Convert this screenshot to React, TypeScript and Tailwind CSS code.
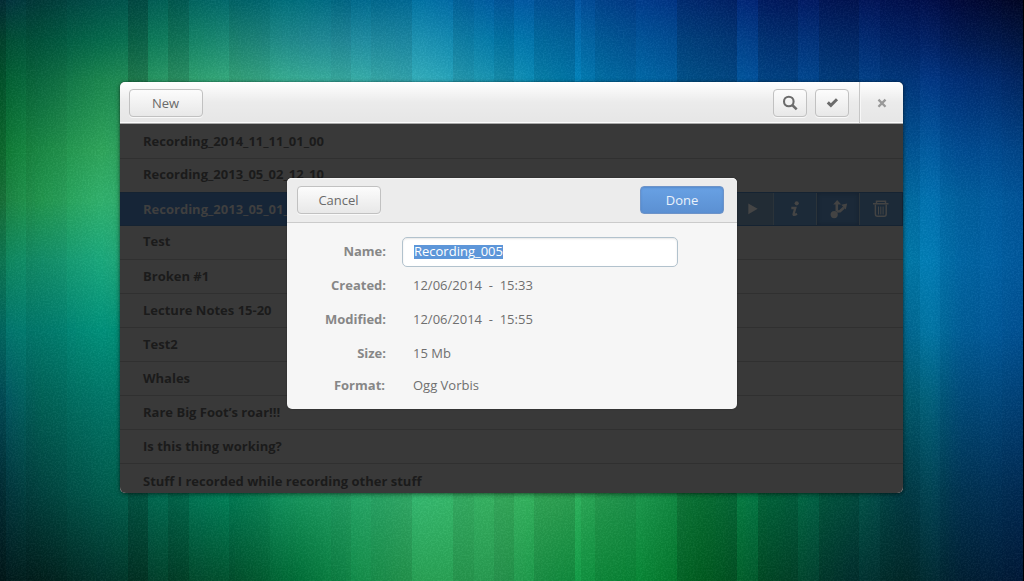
import React from "react";

type RGB = [number, number, number];

const STOPS = [0, 40, 80, 150, 200, 260, 330, 400, 490, 581];

// Wallpaper colours on a coarse grid: [x, colour at each stop].
const COLUMNS: [number, string][] = [
  [0, "01303a 004830 005a2e 0c7230 187a3c 0c8058 007068 00505c 003038 00181a"],
  [40, "003c3a 00543c 0a6a40 1a8c46 229a50 12906a 007c6e 006458 004440 001f1c"],
  [100, "004e48 04684a 1a864e 2ea45a 30b06c 1aa87c 00907a 007466 005a4c 003028"],
  [170, "005e54 0f7a5a 2a9664 2aa068 2aa068 2aa068 00886c 007c68 006c50 004028"],
  [230, "00666a 1a8672 34a67a 2aa068 2aa068 2aa068 00886c 007c68 008058 00502c"],
  [300, "007080 208a90 38ae98 2aa068 2aa068 2aa068 00886c 007c68 189a60 007038"],
  [350, "006a8c 208c9e 38aea6 2aa068 2aa068 2aa068 00886c 007c68 24a466 108a48"],
  [420, "006c9c 1a8aa8 30a4b2 2aa068 2aa068 2aa068 00886c 007c68 34b06a 26984e"],
  [500, "0058a0 0076a8 1490b0 2aa068 2aa068 2aa068 00886c 007c68 36b05e 26984e"],
  [560, "005098 0068a2 007cae 2aa068 2aa068 2aa068 00886c 007c68 30a856 129040"],
  [630, "003c8c 005498 0068a6 2aa068 2aa068 2aa068 00886c 007c68 1e984e 088836"],
  [700, "002c7c 00448a 005698 2aa068 2aa068 2aa068 00886c 007c68 087e3a 006824"],
  [770, "001c68 00347c 004890 2aa068 2aa068 2aa068 00886c 007c68 006c40 004c28"],
  [850, "001458 002a70 003e84 2aa068 2aa068 2aa068 00886c 007c68 005444 003230"],
  [905, "001050 002268 003880 00589a 0070a8 007eb0 006c98 005c70 003c48 002828"],
  [930, "000c46 001e60 003480 00589c 006eac 0078b0 0072a0 005c78 004050 002830"],
  [960, "00083a 001a54 002e78 004e96 0062a2 0068a8 00609c 004c7c 003454 002034"],
  [1023, "000624 001440 002460 004488 00549a 00589e 005094 004078 002a54 001838"],
];

const hex = (s: string): RGB => [
  parseInt(s.slice(0, 2), 16),
  parseInt(s.slice(2, 4), 16),
  parseInt(s.slice(4, 6), 16),
];

const GRID = COLUMNS.map(([x, s]) => ({ x, colors: s.split(" ").map(hex) }));

// Pleats of the wallpaper: [start x, shade], negative is darker.
const PLEATS: [number, number][] = [
  [0, -0.05], [6, 0.05], [26, -0.01], [67, 0.02], [128, -0.09], [148, 0.05],
  [168, -0.04], [189, 0.05], [229, -0.02], [270, 0.02], [290, 0], [331, -0.02],
  [351, 0.02], [371, -0.01], [412, 0.08], [453, -0.01], [474, 0.03],
  [494, -0.02], [514, 0.06], [534, -0.02], [575, 0.12], [581, 0.04],
  [595, -0.02], [636, 0.03], [656, 0.03], [677, -0.07], [737, 0.09],
  [758, -0.05], [798, 0.05], [819, -0.05], [859, 0.05], [880, -0.02],
  [900, -0.02], [920, 0.05], [940, -0.01], [980, 0.02], [1002, 0],
];

function columnGradient(x: number): string {
  let i = 0;
  while (i < GRID.length - 2 && GRID[i + 1].x <= x) i++;
  const a = GRID[i];
  const b = GRID[i + 1];
  const t = Math.min(1, (x - a.x) / (b.x - a.x));
  let shade = 0;
  for (const [start, value] of PLEATS) if (start <= x) shade = value;
  const stops = STOPS.map((y, k) => {
    const c = a.colors[k].map((v, n) => {
      const base = v + (b.colors[k][n] - v) * t;
      const lift = (base * 0.7 + 30) * shade * (n === 0 ? 0.5 : 1);
      return Math.round(shade < 0 ? base * (1 + shade * 1.6) : base + lift);
    });
    return `rgb(${c.join(",")}) ${y}px`;
  });
  return `linear-gradient(${stops.join(",")})`;
}

function Wallpaper() {
  const edges: number[] = [];
  PLEATS.forEach(([start], i) => {
    const end = i + 1 < PLEATS.length ? PLEATS[i + 1][0] : 1023;
    for (let x = start; x < end; x += 3) edges.push(x);
  });
  edges.push(1023);
  return (
    <div className="absolute inset-0 flex bg-black">
      {edges.slice(0, -1).map((x, i) => (
        <div key={x} className="h-full shrink-0" style={{ width: edges[i + 1] - x, backgroundImage: columnGradient(x) }} />
      ))}
      <svg className="absolute inset-0 opacity-[0.035]" width="1024" height="581" aria-hidden="true">
        <filter id="grain" x="0" y="0" width="100%" height="100%" colorInterpolationFilters="sRGB">
          <feTurbulence type="fractalNoise" baseFrequency="0.6" numOctaves="2" />
          <feColorMatrix values="3 0 0 0 -1.2  3 0 0 0 -1.2  3 0 0 0 -1.2  0 0 0 0 1" />
        </filter>
        <rect width="1023" height="581" filter="url(#grain)" />
      </svg>
    </div>
  );
}

const ROWS: { name: string; box: string }[] = [
  { name: "Recording_2014_11_11_01_00", box: "h-[35px] border-b pt-[7px]" },
  { name: "Recording_2013_05_02_12_10", box: "h-[33px] pt-[5px]" },
  { name: "Recording_2013_05_01_12_10", box: "" },
  { name: "Test", box: "h-[34px] border-b pt-[5px]" },
  { name: "Broken #1", box: "h-[34px] border-b pt-[6px]" },
  { name: "Lecture Notes 15-20", box: "h-[34px] border-b pt-[6px]" },
  { name: "Test2", box: "h-[34px] border-b pt-[6px]" },
  { name: "Whales", box: "h-[34px] border-b pt-[6px]" },
  { name: "Rare Big Foot’s roar!!!", box: "h-[34px] border-b pt-[6px]" },
  { name: "Is this thing working?", box: "h-[34px] border-b pt-[6px]" },
  { name: "Stuff I recorded while recording other stuff", box: "h-[29px] pt-[7px]" },
];

const DETAILS: { label: string; value: string; box: string; gap: string }[] = [
  { label: "Created:", value: "12/06/2014\u00a0 -\u00a0 15:33", box: "mt-[8px]", gap: "w-[99px] mr-[27px]" },
  { label: "Modified:", value: "12/06/2014\u00a0 -\u00a0 15:55", box: "mt-[14px]", gap: "w-[99px] mr-[27px]" },
  { label: "Size:", value: "15 Mb", box: "mt-[14px]", gap: "w-[99px] mr-[27px]" },
  { label: "Format:", value: "Ogg Vorbis", box: "mt-[12px]", gap: "w-[98px] mr-[28px]" },
];

const BUTTON =
  "flex items-center justify-center rounded-[4px] border border-[#c1c1c1] bg-gradient-to-b from-[#fcfcfc] to-[#e8e8e8] text-[#6a6a6a] shadow-[0_1px_0_rgba(255,255,255,0.7)]";

function SelectedRow() {
  return (
    <li className="flex h-[34px] justify-between border-y border-y-[#152332] bg-[#162537] text-[#3f3f3f]">
      <span className="pl-[23px] pt-[6px] leading-5">Recording_2013_05_01_12_10</span>
      <div className="flex">
        <div className="flex w-[43px] border-r border-[#2b3339] bg-[#222c35]">
          <svg width="42" height="32" viewBox="0 0 42 32">
            <path d="M17.3 10.5L26.700 15.800L17.3 21.200Z" fill="#454545" />
          </svg>
        </div>
        <div className="flex w-[43px] border-r border-[#2b3339] bg-[#1c2a38]">
          <svg width="42" height="32" viewBox="0 0 42 32" fill="none" stroke="#454545">
            <circle cx="22.700" cy="10.300" r="2.100" fill="#454545" stroke="none" />
            <path d="M17.300 15H21.300L19.600 21Q19.200 23 23 20.800" strokeWidth="2.300" />
          </svg>
        </div>
        <div className="flex w-[43px] border-r border-[#2b3339] bg-[#1b2938] shadow-[inset_0_0_4px_rgba(18,28,40,0.7)]">
          <svg width="42" height="32" viewBox="0 0 42 32" fill="#434343" stroke="#434343">
            <circle cx="17.200" cy="21.600" r="3.600" stroke="none" />
            <path d="M19.800 18.500V10M20 18.500L23 18.300L27 14.500" strokeWidth="2.600" />
            <path d="M16.200 11.500L20.200 7L24.200 11.500ZM24.200 11.700L30.200 10.600L28.800 16.500Z" stroke="none" />
          </svg>
        </div>
        <div className="flex w-[43px] border-r border-[#152332] bg-[#1c2a38]">
          <svg width="42" height="32" viewBox="0 0 42 32" fill="none" stroke="#434343">
            <path d="M16.500 10V8.300H25.500V10M13 10.700H28.500" strokeWidth="1.500" />
            <path d="M15.400 11.500V21Q15.400 23.300 17.400 23.300H24.200Q26.200 23.300 26.200 21V11.500" strokeWidth="1.500" />
            <path d="M18.500 13.500V21.500M20.800 13.500V21.500M23.100 13.500V21.500" />
          </svg>
        </div>
      </div>
    </li>
  );
}

export default function App() {
  return (
    <div className="relative h-[581px] w-[1024px] overflow-hidden pl-[120px] pt-[82px] font-['Open_Sans','Noto_Sans',sans-serif] text-[13px]">
      <Wallpaper />
      <main className="relative flex h-[411px] w-[783px] flex-col rounded-[5px] bg-[#aaa] shadow-[0_1px_5px_rgba(0,0,0,0.55),0_0_1px_rgba(0,0,0,0.6)]">
        <header className="flex h-[42px] shrink-0 rounded-t-[5px] border-b border-[#a9a9a9] bg-gradient-to-b from-white via-[#ebebeb] to-[#e6e6e6] shadow-[inset_0_-1px_0_#fbfbfb]">
          <button className={`${BUTTON} ml-[9px] mt-[7px] h-[28px] w-[74px] pr-px pt-px`}>New</button>
          <button className={`${BUTTON} ml-auto mt-[7px] h-[28px] w-[34px]`} aria-label="Search">
            <svg width="32" height="26" viewBox="0 0 32 26" fill="none" stroke="#6b6b6b">
              <circle cx="14.800" cy="11.500" r="4.800" strokeWidth="2.100" />
              <path d="M18.200 15L22.700 19.400" strokeWidth="2.500" />
            </svg>
          </button>
          <button className={`${BUTTON} ml-[8px] mt-[7px] h-[28px] w-[34px]`} aria-label="Select">
            <svg width="32" height="26" viewBox="0 0 32 26" fill="none" stroke="#6b6b6b">
              <path d="M11.800 12.300L14.900 15.300L21 9.300" strokeWidth="3" />
            </svg>
          </button>
          <button className="ml-[10px] flex w-[44px] items-center justify-center border-l border-[#c6c6c6] shadow-[inset_1px_0_0_#f7f7f7]" aria-label="Close">
            <svg width="44" height="42" viewBox="0 0 44 42" fill="none" stroke="#999">
              <path d="M18.900 17.600L26.100 24.800M26.100 17.600L18.900 24.800" strokeWidth="2.400" />
            </svg>
          </button>
        </header>
        <ul className="h-[369px] overflow-hidden rounded-b-[6px] bg-[#393939] font-bold text-[#1b1b1b]">
          {ROWS.map((row, i) =>
            i === 2 ? (
              <SelectedRow key={row.name} />
            ) : (
              <li key={row.name} className={`border-[#303030] pl-[23px] leading-5 ${row.box}`}>
                {row.name}
              </li>
            )
          )}
        </ul>
        <section role="dialog" className="absolute left-[167px] top-[96px] h-[231px] w-[450px] rounded-[5px] bg-[#f6f6f6] text-[#6f6f6f] shadow-[0_0_2px_rgba(0,0,0,0.3)]">
          <div className="flex h-[45px] justify-between rounded-t-[5px] border-b border-[#cbcbcb] bg-[#ececec] pl-[10px] pr-[13px] pt-[8px] shadow-[inset_0_1px_0_#f6f6f6]">
            <button className={`${BUTTON} h-[28px] w-[84px] pr-px pt-px`}>Cancel</button>
            <button className="flex h-[28px] w-[84px] items-center justify-center rounded-[4px] border border-[#6d93c8] bg-gradient-to-b from-[#68a1e4] to-[#5b90d2] pt-px text-[#eaf2fb] shadow-[inset_0_1px_2px_rgba(60,110,180,0.45)]">
              Done
            </button>
          </div>
          <div className="flex pt-[14px]">
            <span className="w-[99px] pt-[4px] text-right font-bold leading-5 text-[#878787]">Name:</span>
            <div className="ml-[16px] flex h-[30px] w-[276px] items-center rounded-[5px] border border-[#b2c2cd] bg-white pl-[11px] shadow-[inset_0_1px_2px_rgba(0,0,0,0.1)]">
              <span className="h-[14px] bg-[#5d96d9] leading-[13px] text-white">Recording_005</span>
            </div>
          </div>
          {DETAILS.map((d) => (
            <div key={d.label} className={`flex h-5 leading-5 ${d.box}`}>
              <span className={`text-right font-bold text-[#878787] ${d.gap}`}>{d.label}</span>
              <span>{d.value}</span>
            </div>
          ))}
        </section>
      </main>
    </div>
  );
}
